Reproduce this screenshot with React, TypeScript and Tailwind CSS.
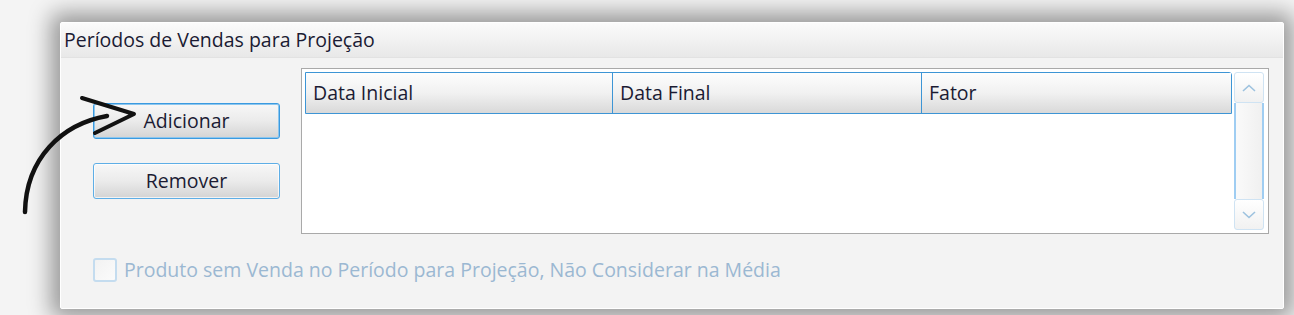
import React from "react";

const font = "[font-family:'Open_Sans','Noto_Sans',sans-serif]";

const Arrow = () => (
  <svg className="absolute left-0 top-0" width="150" height="230" viewBox="0 0 150 230" fill="none">
    <path d="M107 116 C 62 124, 26 158, 25 212" stroke="#111" strokeWidth="4.5" strokeLinecap="round" />
    <path d="M82 98 L134 114 L95 133" stroke="#111" strokeWidth="4" strokeLinecap="round" strokeLinejoin="round" />
  </svg>
);

const WinButton = ({ label, focused }: { label: string; focused?: boolean }) => (
  <button
    className={`w-[187px] h-[36px] rounded-[3px] border ${
      focused ? "border-[#3a9ae0] shadow-[inset_0_0_0_1px_#8cc6ee]" : "border-[#5eaee6] shadow-[inset_0_0_0_1px_rgba(255,255,255,0.7)]"
    } bg-gradient-to-b from-[#f7f7f7] via-[#ebebeb] to-[#d4d4d4] text-[19.5px] text-[#1b1b33] ${font}`}
  >
    {label}
  </button>
);

const HeaderCell = ({ label, w, last }: { label: string; w: string; last?: boolean }) => (
  <div
    className={`${w} h-full flex items-center pl-[7px] ${
      last ? "" : "border-r border-[#3d95d5]"
    } bg-gradient-to-b from-[#fdfdfd] via-[#f1f1f1] to-[#d9d9d9] text-[19.5px] text-[#1b1b33] ${font}`}
  >
    {label}
  </div>
);

export default function App() {
  return (
    <div className="relative w-[1294px] h-[315px] bg-[#f4f4f4] overflow-hidden pt-[22px] pl-[60px]">
      <div className="w-[1224px] h-[287px] bg-[#f3f3f3] border border-white rounded-[2px] shadow-[0_0_22px_9px_rgba(0,0,0,0.38)] flex flex-col">
        <div
          className={`h-[35px] flex items-center pl-[3px] bg-gradient-to-b from-[#fbfbfb] to-[#e8e8e8] border-b border-[#e2e2e2] text-[19.5px] text-[#1b1b33] ${font}`}
        >
          Períodos de Vendas para Projeção
        </div>
        <div className="flex pt-[10px] pl-[32px] gap-[21px]">
          <div className="flex flex-col gap-[24px] pt-[35px]">
            <WinButton label="Adicionar" focused />
            <WinButton label="Remover" />
          </div>
          <div className="w-[968px] h-[166px] border border-[#a9a9a9] bg-white flex p-[3px]">
            <div className="w-[927px] h-[42px] flex border border-[#3d95d5] rounded-tr-[3px]">
              <HeaderCell label="Data Inicial" w="w-[307px]" />
              <HeaderCell label="Data Final" w="w-[309px]" />
              <HeaderCell label="Fator" w="flex-1" last />
            </div>
            <div className="ml-[2px] w-[30px] h-[158px] flex flex-col">
              <div className="h-[31px] rounded-[3px] border border-[#cfe3f3] bg-gradient-to-b from-white to-[#f1f1f1] flex items-center justify-center">
                <svg width="14" height="8" viewBox="0 0 14 8" fill="none">
                  <path d="M1 7 L7 1.5 L13 7" stroke="#9dc2df" strokeWidth="1.6" />
                </svg>
              </div>
              <div className="flex-1 border-x-2 border-[#9fcdf2] bg-gradient-to-r from-[#fafafa] to-[#f0f0f0]" />
              <div className="h-[31px] rounded-[3px] border border-[#cfe3f3] bg-gradient-to-b from-white to-[#f1f1f1] flex items-center justify-center">
                <svg width="14" height="8" viewBox="0 0 14 8" fill="none">
                  <path d="M1 1 L7 6.5 L13 1" stroke="#9dc2df" strokeWidth="1.6" />
                </svg>
              </div>
            </div>
          </div>
        </div>
        <label className="flex items-center gap-[7px] pl-[32px] mt-[21px]">
          <span className="w-[24px] h-[24px] rounded-[3px] border-2 border-[#c4dcef] bg-gradient-to-br from-[#f2f2f2] to-[#fbfbfb]" />
          <span className={`text-[19.5px] text-[#9bb8d2] ${font}`}>
            Produto sem Venda no Período para Projeção, Não Considerar na Média
          </span>
        </label>
      </div>
      <Arrow />
    </div>
  );
}
